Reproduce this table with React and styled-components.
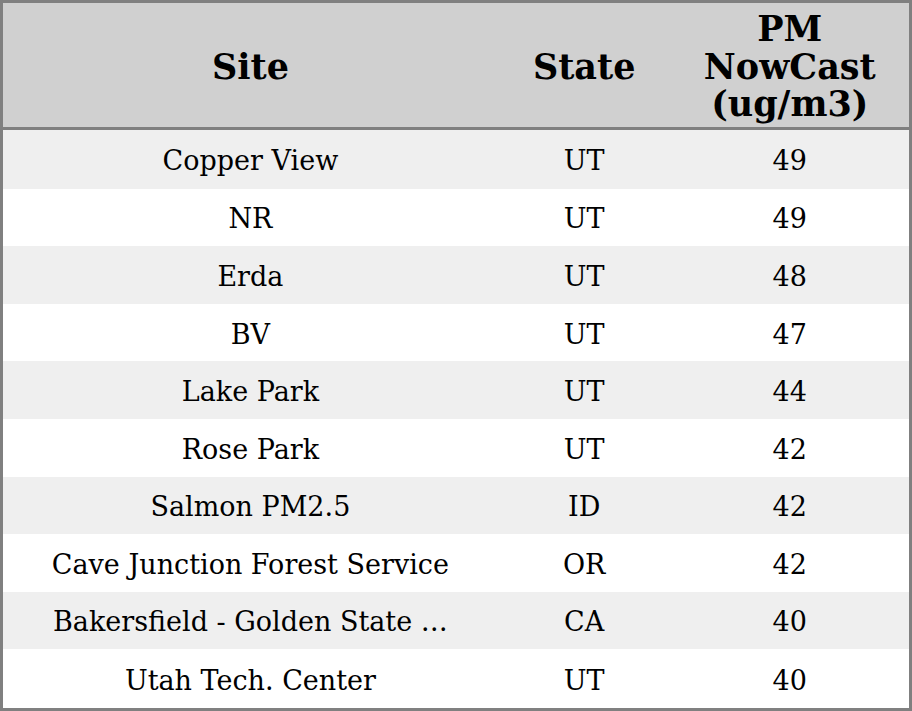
import styled, { createGlobalStyle } from 'styled-components';

const rows = [
  { site: 'Copper View', state: 'UT', pm: 49 },
  { site: 'NR', state: 'UT', pm: 49 },
  { site: 'Erda', state: 'UT', pm: 48 },
  { site: 'BV', state: 'UT', pm: 47 },
  { site: 'Lake Park', state: 'UT', pm: 44 },
  { site: 'Rose Park', state: 'UT', pm: 42 },
  { site: 'Salmon PM2.5', state: 'ID', pm: 42 },
  { site: 'Cave Junction Forest Service', state: 'OR', pm: 42 },
  { site: 'Bakersfield - Golden State \u2026', state: 'CA', pm: 40 },
  { site: 'Utah Tech. Center', state: 'UT', pm: 40 },
];

function App() {
  return (
    <>
      <GlobalStyle />
      <Table>
        <colgroup>
          <col style={{ width: '54.6%' }} />
          <col style={{ width: '19%' }} />
          <col style={{ width: '26.4%' }} />
        </colgroup>
        <thead>
          <tr>
            <HeadCell>Site</HeadCell>
            <HeadCell>State</HeadCell>
            <HeadCell>PM NowCast (ug/m3)</HeadCell>
          </tr>
        </thead>
        <tbody>
          {rows.map((r, i) => (
            <Row key={i} striped={i % 2 === 0}>
              <Cell>{r.site}</Cell>
              <Cell>{r.state}</Cell>
              <Cell>{r.pm}</Cell>
            </Row>
          ))}
        </tbody>
      </Table>
    </>
  );
}

const GlobalStyle = createGlobalStyle`
  html, body {
    margin: 0;
    padding: 0;
    background: #fff;
  }
  body {
    font-family: "DejaVu Serif", serif;
    color: #000;
  }
`;

const Table = styled.table`
  width: 912px;
  height: 711px;
  table-layout: fixed;
  border-collapse: collapse;
  border: 3px solid #808080;
`;

const HeadCell = styled.th`
  height: 121px;
  padding: 3px 8px 0;
  background: #d0d0d0;
  border-bottom: 3px solid #808080;
  font-size: 35px;
  font-weight: bold;
  line-height: 37.5px;
  text-align: center;
  vertical-align: middle;
`;

const Row = styled.tr`
  background: ${p => (p.striped ? '#efefef' : '#fff')};
`;

const Cell = styled.td`
  padding: 3px 10px 0;
  font-size: 27px;
  text-align: center;
  vertical-align: middle;
  white-space: nowrap;
`;

export default App;
